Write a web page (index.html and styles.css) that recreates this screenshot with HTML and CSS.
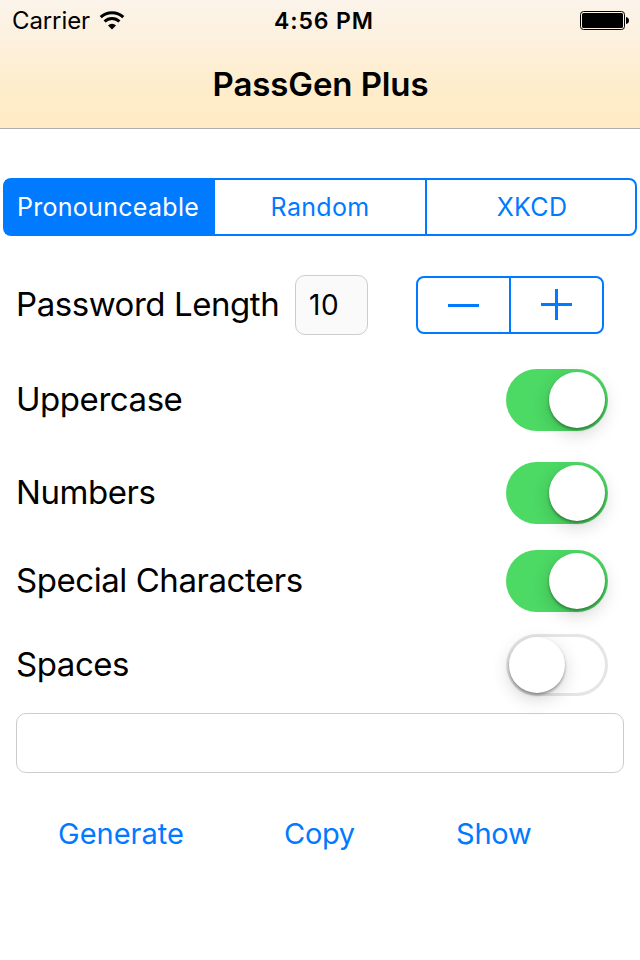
FILE: index.html
```html
<!DOCTYPE html>
<html lang="en">
<head>
    <meta charset="UTF-8">
    <title>PassGen Plus</title>
    <link rel="stylesheet" href="styles.css">
</head>
<body>
<div class="header">
    <div class="status">
        <div class="carrier">
            <span class="carrier-name">Carrier</span>
            <svg class="wifi" width="26" height="20" viewBox="0 0 26 20">
                <path d="M1.7 6.2A16.3 16.3 0 0 1 24.3 6.2" fill="none" stroke="#000" stroke-width="3"/>
                <path d="M5.6 10.5A10.6 10.6 0 0 1 20.4 10.5" fill="none" stroke="#000" stroke-width="3"/>
                <path d="M9 14.4A5.8 5.8 0 0 1 17 14.4L13 18.6Z"/>
            </svg>
        </div>
        <span class="time">4:56 PM</span>
        <div class="power">
            <svg width="50" height="20" viewBox="0 0 50 20">
                <rect x=".5" y=".5" width="44" height="18" rx="3" fill="none" stroke="#000"/>
                <rect x="2" y="2" width="41" height="15" rx="1.5"/>
                <path d="M46 6q3 .5 3 3.5t-3 3.5z"/>
            </svg>
        </div>
    </div>
    <h1 class="title">PassGen Plus</h1>
</div>

<div class="tabs">
    <button class="tab current">Pronounceable</button>
    <button class="tab">Random</button>
    <button class="tab last">XKCD</button>
</div>

<div class="length">
    <label class="label len-label" for="len">Password Length</label>
    <input class="field len" id="len" type="text" value="10">
    <div class="stepper">
        <button class="step"><svg width="32" height="32"><path d="M0 16.5H31" stroke="#007aff" stroke-width="3"/></svg></button>
        <button class="step"><svg width="32" height="32"><path d="M0 15.5H31M15.5 0V31" stroke="#007aff" stroke-width="3"/></svg></button>
    </div>
</div>

<!-- options -->
<ul class="options">
    <li class="option"><span class="label">Uppercase</span><span class="switch on"></span></li>
    <li class="option numbers"><span class="label">Numbers</span><span class="switch on"></span></li>
    <li class="option special"><span class="label">Special Characters</span><span class="switch on"></span></li>
    <li class="option spaces"><span class="label">Spaces</span><span class="switch"></span></li>
</ul>

<input class="field result" type="text" aria-label="Password">

<div class="actions">
    <button class="action generate">Generate</button>
    <button class="action copy">Copy</button>
    <button class="action show">Show</button>
</div>
</body>
</html>
```

FILE: styles.css
```css
* {
    margin: 0;
    padding: 0;
    box-sizing: border-box;
}

body {
    width: 640px;
    height: 960px;
    overflow: hidden;
    background: #fff;
    color: #000;
    font-family: Inter, "Liberation Sans", sans-serif;
}

ul {
    list-style: none;
}

button {
    border: 0;
    background: none;
    color: #007aff;
    font-family: inherit;
}

.header {
    height: 129px;
    border-bottom: 1px solid #adadad;
    background: linear-gradient(#fbf4ea, #fdf0dc 35%, #feedcb 70%, #feebc6);
}

.status {
    display: grid;
    grid-template-columns: 1fr auto 1fr;
    height: 40px;
    align-items: center;
    padding: 2px 10px 0 12px;
    font-size: 24px;
}

.carrier {
    display: flex;
    align-items: center;
}

.carrier-name {
    margin-top: -2px;
    letter-spacing: -.1px;
}

.wifi {
    margin: 0 0 0 9px;
}

.time {
    padding-left: 6px;
    font-size: 23px;
    font-weight: 600;
    letter-spacing: .9px;
}

.power {
    display: flex;
    justify-content: flex-end;
}

.title {
    padding-left: 1px;
    font-size: 33px;
    font-weight: 600;
    line-height: 88px;
    letter-spacing: -.1px;
    text-align: center;
}

/* segmented control */
.tabs {
    display: flex;
    height: 58px;
    margin: 49px 3px 0;
    border: 2px solid #007aff;
    border-radius: 8px;
}

.tab {
    width: 210px;
    font-size: 25px;
    letter-spacing: .3px;
}

.tab.current {
    padding-right: 4px;
    background: #007aff;
    color: #fff;
}

.tab.last {
    border-left: 2px solid #007aff;
    padding-left: 2px;
}

.length {
    display: flex;
    height: 60px;
    margin: 39px 36px 0 16px;
    align-items: center;
}

.label {
    padding-bottom: 2px;
    font-size: 33px;
    line-height: 40px;
    letter-spacing: -.45px;
    white-space: nowrap;
}

.len-label {
    width: 279px;
}

.field {
    height: 60px;
    border: 1px solid #ccc;
    border-radius: 10px;
    background: #fff;
    font-family: inherit;
}

.len {
    width: 73px;
    padding: 0 0 1px 13px;
    background: #fafafa;
    font-size: 28px;
    letter-spacing: .5px;
}

.stepper {
    display: flex;
    width: 188px;
    height: 58px;
    margin-left: auto;
    border: 2px solid #007aff;
    border-radius: 8px;
}

.step {
    display: flex;
    flex: 1;
    align-items: center;
    justify-content: center;
}

.step + .step {
    border-left: 2px solid #007aff;
}

.options {
    margin: 34px 32px 0 16px;
}

.option {
    display: flex;
    height: 62px;
    align-items: center;
    justify-content: space-between;
}

.numbers {
    margin-top: 31px;
}

.special {
    margin-top: 26px;
}

.spaces {
    margin-top: 22px;
}

.switch {
    display: flex;
    width: 102px;
    height: 62px;
    padding: 3px;
    border-radius: 31px;
    box-shadow: inset 0 0 0 3px #e5e5e5;
}

/* knob */
.switch::after {
    content: "";
    width: 56px;
    height: 56px;
    border-radius: 50%;
    background: #fff;
    box-shadow: 0 6px 18px rgba(0, 0, 0, .17), 0 2px 3px rgba(0, 0, 0, .35);
}

.switch.on {
    justify-content: flex-end;
    background: #4cd964;
    box-shadow: none;
}

.result {
    display: block;
    width: 608px;
    margin: 17px 16px 0;
    padding: 0 13px;
    font-size: 27px;
}

.actions {
    display: flex;
    height: 60px;
    margin-top: 30px;
    padding-left: 58px;
    align-items: center;
}

.action {
    font-size: 29px;
    text-align: left;
}

.generate {
    width: 226px;
}

.copy {
    width: 172px;
    letter-spacing: -.3px;
}

.show {
    letter-spacing: -.2px;
}
```
